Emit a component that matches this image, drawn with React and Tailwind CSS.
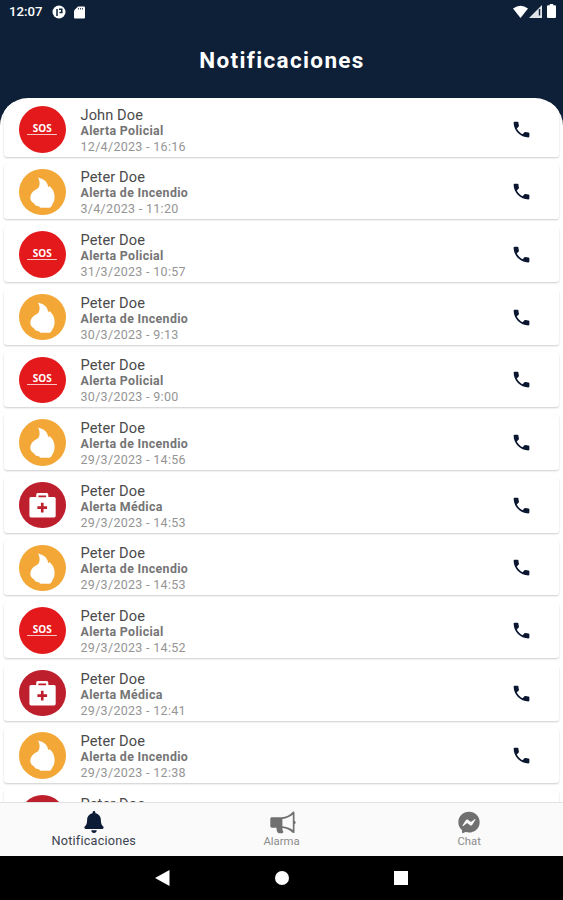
import { FaBell, FaFacebookMessenger } from "react-icons/fa";
import { MdPhone } from "react-icons/md";

const alerts = [
  { name: "John Doe", type: "policial", date: "12/4/2023 - 16:16" },
  { name: "Peter Doe", type: "incendio", date: "3/4/2023 - 11:20" },
  { name: "Peter Doe", type: "policial", date: "31/3/2023 - 10:57" },
  { name: "Peter Doe", type: "incendio", date: "30/3/2023 - 9:13" },
  { name: "Peter Doe", type: "policial", date: "30/3/2023 - 9:00" },
  { name: "Peter Doe", type: "incendio", date: "29/3/2023 - 14:56" },
  { name: "Peter Doe", type: "medica", date: "29/3/2023 - 14:53" },
  { name: "Peter Doe", type: "incendio", date: "29/3/2023 - 14:53" },
  { name: "Peter Doe", type: "policial", date: "29/3/2023 - 14:52" },
  { name: "Peter Doe", type: "medica", date: "29/3/2023 - 12:41" },
  { name: "Peter Doe", type: "incendio", date: "29/3/2023 - 12:38" },
  // only the top of this one shows above the tabs
  { name: "Peter Doe", type: "medica" },
];

const SosIcon = () => (
  <div className="mb-[2px] flex w-[30px] flex-col items-center border-b border-white/75 font-['Open_Sans',sans-serif] text-[10px] leading-[12px] font-bold text-white">
    SOS
  </div>
);

const FlameIcon = () => (
  <svg viewBox="0 0 46 46" className="size-full" fill="#fff">
    <path d="M18.800 8.300c4.200 1 7 2.600 8.600 5.200 1 1.600 1.300 3 1.400 4.500l1.200-1.200c3.500 2.600 5.200 6.400 5.200 10.700 0 3.400-.8 6-2.400 7.800-.5 2-1.700 3.100-3.600 3.100h-6.400c-1.500 0-2.500-.5-3-1.600-2.300.1-4.200-1-5.100-3-2.200-1-3.500-2.800-3.500-5.400 0-2.600 1-4.800 3-6.500 1.800-1.500 4.200-2.200 5.300-3.900.8-1.300 1-3.400.7-5.600-.2-1.500-.6-2.900-1.400-4.100z" />
  </svg>
);

const MedkitIcon = () => (
  <svg viewBox="0 0 46 46" className="size-full">
    <path
      fill="#fff"
      fillRule="evenodd"
      d="M17 14.800v-2.300a1.500 1.500 0 0 1 1.500-1.500h9a1.500 1.500 0 0 1 1.500 1.500v2.300h5.800a1.500 1.500 0 0 1 1.500 1.500v17.200a1.500 1.500 0 0 1-1.500 1.500h-23a1.500 1.500 0 0 1-1.500-1.500V16.300a1.500 1.500 0 0 1 1.500-1.500zm2.200.2h7.600v-1.600h-7.600z"
    />
    <path fill="#bd1f2d" d="M21.700 20.600h2.600v3.500h3.500v2.500h-3.500v3.500h-2.600v-3.500h-3.500v-2.500h3.500z" />
  </svg>
);

const MegaphoneIcon = () => (
  <svg viewBox="0 0 26 23" className="ml-[3px] h-[23px] w-[26px]">
    <path
      fill="currentColor"
      fillRule="evenodd"
      d="M2 6.200h9.500C16 6 20 4 22.700 1c.8-.8 1.800-.4 1.800.8v8c.8.3 1.200.9 1.200 1.700s-.4 1.400-1.200 1.700v7.700c0 1.200-1 1.600-1.800.8-2.700-2.700-6.200-4.200-10.200-4.700-.3 1.300 0 2.300.6 3.200.6.900-.1 2-1.100 2H8.900c-.8 0-1.300-.4-1.600-1.100-.6-1.500-.9-2.700-.8-4.300H2c-1 0-1.700-.7-1.700-1.700V7.900c0-1 .7-1.700 1.700-1.700zm10.400 1.700v7.400c3.900.3 7.400 1.500 10.400 3.700V3.800c-3 2.300-6.500 3.800-10.400 4.100z"
    />
  </svg>
);

const alertTypes = {
  policial: { label: "Alerta Policial", color: "bg-[#e3191b]", Icon: SosIcon },
  incendio: { label: "Alerta de Incendio", color: "bg-[#f2a736]", Icon: FlameIcon },
  medica: { label: "Alerta Médica", color: "bg-[#bd1f2d]", Icon: MedkitIcon },
};

function AlertRow({ name, type, date }) {
  const { label, color, Icon } = alertTypes[type];
  return (
    <li className="flex h-[55px] shrink-0 items-center rounded-[3px] bg-white pr-[27px] pl-[15px] shadow-[0_1px_2px_rgba(0,0,0,0.2)]">
      <div className={`flex size-[46.5px] shrink-0 items-center justify-center rounded-full ${color}`}>
        <Icon />
      </div>
      <div className="ml-[15px] h-[51px] flex-1 pt-[3px]">
        <p className="text-[14.6px] leading-4 tracking-[0.1px] text-[#4a4a4a]">{name}</p>
        {date && (
          <>
            <p className="text-[12.4px] leading-4 font-bold tracking-[0.33px] text-[#757575]">{label}</p>
            <p className="text-[12.5px] leading-4 tracking-[0.3px] text-[#959595]">{date}</p>
          </>
        )}
      </div>
      <MdPhone className="size-[21px] text-[#0b1730]" />
    </li>
  );
}

function StatusBar() {
  return (
    <div className="flex h-6 items-center justify-between pr-[7px] pl-[9px] text-white">
      <div className="flex items-center">
        <span className="w-[43px] text-[13.2px] leading-4 font-medium">12:07</span>
        <svg viewBox="0 0 14 14" className="size-[14px]">
          <circle cx="7" cy="7" r="6.500" fill="#fff" />
          <path d="M5 11V4M7 4.200h2.800v3.300H7.500" fill="none" stroke="#0d2038" strokeWidth="1.500" />
        </svg>
        <svg viewBox="0 0 11 13" className="ml-[8px] h-[13px] w-[11px]">
          <path d="M4 .5h6a1 1 0 0 1 1 1v10a1 1 0 0 1-1 1H1a1 1 0 0 1-1-1V4.500z" fill="#fff" />
          <path d="M4.500 2v1.500M6.500 2v1.500M8.500 2v1.500" stroke="#0d2038" strokeWidth="0.800" />
        </svg>
      </div>
      <div className="flex items-center gap-[1px] pb-[2px]">
        <svg viewBox="0 0 15 13" className="h-[13px] w-[15px]">
          <path d="M7.500 13 0 3.500Q7.500-2 15 3.500z" fill="#fff" />
        </svg>
        <svg viewBox="0 0 13 13" className="h-[13px] w-[13px]">
          <path d="M13 0v13H0z" fill="#dfe3e8" />
          <path d="M10.500 4v6.500" stroke="#0d2038" strokeWidth="1.400" />
        </svg>
        <svg viewBox="0 0 9 14" className="ml-[4px] h-[14px] w-[9px]">
          <path d="M2.800 0h3.400v1.300H8a1 1 0 0 1 1 1V13a1 1 0 0 1-1 1H1a1 1 0 0 1-1-1V2.300a1 1 0 0 1 1-1h1.800z" fill="#fff" />
        </svg>
      </div>
    </div>
  );
}

function BottomTabs() {
  return (
    <nav className="grid h-[54px] shrink-0 grid-cols-3 border-t border-[#e2e2e2] bg-[#fafafa] text-[#707070]">
      <div className="flex flex-col items-center pt-[8px] text-[#0c1b36]">
        <FaBell className="size-[22px]" />
        <span className="text-[12.7px] leading-[15px] tracking-[0.2px] text-[#3c4350]">Notificaciones</span>
      </div>
      <div className="flex flex-col items-center pt-[8px]">
        <MegaphoneIcon />
        <span className="text-[11.3px] leading-[15px] text-[#8c8c8c]">Alarma</span>
      </div>
      <div className="flex flex-col items-center pt-[8px]">
        <FaFacebookMessenger className="h-[23px] w-[22px]" />
        <span className="text-[11.3px] leading-[15px] text-[#8c8c8c]">Chat</span>
      </div>
    </nav>
  );
}

function AndroidNav() {
  return (
    <div className="flex h-[44px] shrink-0 items-center justify-center gap-[105px] bg-black pr-[1px]">
      <svg viewBox="0 0 15 16" className="h-4 w-[15px]">
        <path d="M14.500 0v16L0 8z" fill="#fff" />
      </svg>
      <div className="size-[14px] rounded-full bg-white" />
      <div className="size-[14px] bg-white" />
    </div>
  );
}

export default function App() {
  return (
    <div className="flex h-[900px] w-[563px] flex-col overflow-hidden bg-white font-['Roboto',sans-serif]">
      {/* Header */}
      <header className="h-[97.5px] shrink-0 bg-[#0d2038]">
        <StatusBar />
        <h1 className="pt-[22px] pl-[1px] text-center text-[22.5px] leading-7 font-bold tracking-[1.35px] text-white">
          Notificaciones
        </h1>
      </header>

      {/* List */}
      <main className="min-h-0 flex-1 overflow-hidden bg-linear-to-b from-[#0d2038] from-[28px] to-white to-[28px]">
        <ul className="flex h-full flex-col gap-[7.65px] overflow-hidden rounded-t-[28px] bg-white px-[4px] pt-[4.3px]">
          {alerts.map((alert, i) => (
            <AlertRow key={i} {...alert} />
          ))}
        </ul>
      </main>

      <BottomTabs />
      <AndroidNav />
    </div>
  );
}
